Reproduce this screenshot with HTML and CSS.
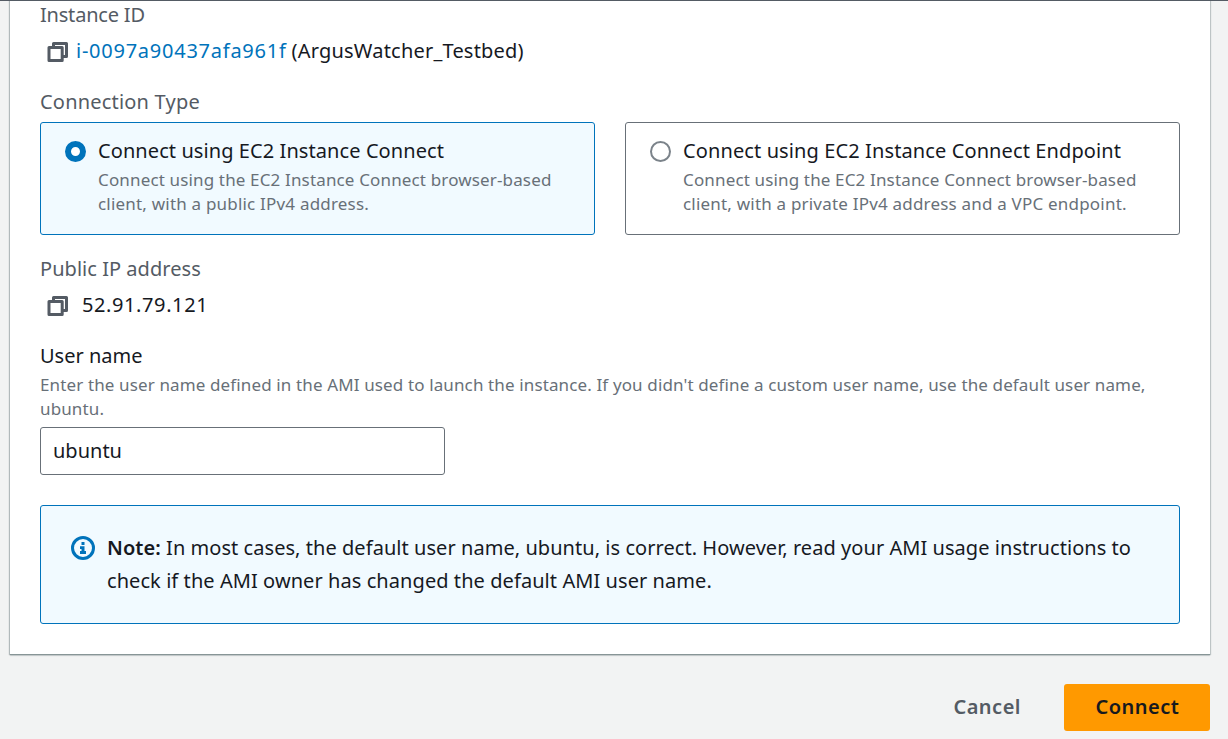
FILE: index.html
```html
<!DOCTYPE html>
<html lang="en">
<head>
<meta charset="utf-8">
<title>Connect to instance</title>
<link rel="stylesheet" href="styles.css">
</head>
<body>
<svg class="sprite" aria-hidden="true">
  <symbol id="copy" viewBox="0 0 22 22">
    <path d="M6.5 6V2.5h13v13H16" fill="none" stroke="currentColor" stroke-width="3" stroke-linejoin="round"/>
    <rect x="2" y="6.4" width="13.2" height="13.2" fill="none" stroke="currentColor" stroke-width="3" stroke-linejoin="round"/>
  </symbol>
</svg>
<main class="panel">
  <section class="field">
    <div class="label t-instance">Instance ID</div>
    <div class="value"><svg class="copy"><use href="#copy"/></svg><a class="link">i-0097a90437afa961f</a><span class="name">(ArgusWatcher_Testbed)</span></div>
  </section>
  <section class="field type">
    <div class="label t-type">Connection Type</div>
    <div class="tiles">
      <label class="tile selected">
        <span class="radio"></span>
        <span class="tile-body">
          <span class="tile-title">Connect using EC2 Instance Connect</span>
          <span class="hint">Connect using the EC2 Instance Connect browser-based<br><span class="t-public">client, with a public IPv4 address.</span></span>
        </span>
      </label>
      <label class="tile">
        <span class="radio"></span>
        <span class="tile-body">
          <span class="tile-title t-endpoint">Connect using EC2 Instance Connect Endpoint</span>
          <span class="hint">Connect using the EC2 Instance Connect browser-based<br><span class="t-private">client, with a private IPv4 address and a VPC endpoint.</span></span>
        </span>
      </label>
    </div>
  </section>
  <section class="field ip">
    <div class="label t-ip">Public IP address</div>
    <div class="value"><svg class="copy"><use href="#copy"/></svg><span class="address">52.91.79.121</span></div>
  </section>
  <section class="field user">
    <div class="label dark">User name</div>
    <div class="hint t-user">Enter the user name defined in the AMI used to launch the instance. If you didn't define a custom user name, use the default user name,<br>ubuntu.</div>
    <div class="input">ubuntu</div>
  </section>
  <section class="note">
    <svg class="info" viewBox="0 0 24 24"><circle cx="12" cy="12" r="10.5" fill="none" stroke="currentColor" stroke-width="3"/><path d="M10.5 6h3v3h-3zM9 10.2h4.5V15H15v3H9v-3h1.5v-2H9z" fill="currentColor"/></svg>
    <p class="note-text"><b>Note:</b> In most cases, the default user name, ubuntu, is correct. However, read your AMI usage instructions to<br><span class="t-check">check if the AMI owner has changed the default AMI user name.</span></p>
  </section>
</main>
<footer class="actions">
  <span class="button plain">Cancel</span>
  <span class="button primary">Connect</span>
</footer>
</body>
</html>
```
FILE: styles.css
```css
* { box-sizing: border-box; }
body {
  margin: 0;
  padding: 0 18px 0 10px;
  height: 739px;
  overflow: hidden;
  background: #f2f3f3;
  color: #16191f;
  font: 20px/28px "Noto Sans", sans-serif;
}
body::before {
  content: "";
  position: absolute;
  inset: 0 0 auto;
  height: 1px;
  background: #545b64;
}
.sprite { position: absolute; width: 0; height: 0; }
.panel {
  height: 655px;
  padding: 1px 30px 0;
  background: #fff;
  border-bottom: 1px solid #879596;
  box-shadow: 0 1px 1px rgba(0, 28, 36, .12), 1px 0 1px rgba(0, 28, 36, .2), -1px 0 1px rgba(0, 28, 36, .25);
}
.label { color: #545b64; white-space: nowrap; }
.dark { color: #16191f; }
.value { display: flex; align-items: center; margin-top: 8px; padding-left: 7px; white-space: nowrap; }
.copy { width: 22px; height: 22px; margin-top: 2px; color: #545b64; }
.link { margin-left: 7px; color: #0073bb; letter-spacing: .75px; }
.name { margin-left: 5px; letter-spacing: .2px; }
.address { margin-left: 13px; letter-spacing: .6px; }
.type { margin-top: 23px; }
.ip { margin-top: 20px; }
.user { margin-top: 23px; }
.tiles { display: grid; grid-template-columns: 1fr 1fr; gap: 30px; margin-top: 6px; }
.tile {
  display: flex;
  height: 113px;
  padding: 14px 23px 0 24px;
  border: 1px solid #687078;
  border-radius: 3px;
}
.selected { background: #f1faff; border-color: #0073bb; }
.radio {
  flex: none;
  width: 21px;
  height: 21px;
  margin: 4px 12px 0 0;
  border: 2px solid #7b838a;
  border-radius: 50%;
  background: #fff;
}
.selected .radio { border: 6px solid #0073bb; }
.tile-body, .tile-title, .hint { display: block; white-space: nowrap; }
.tile-title { letter-spacing: .08px; }
.hint { margin-top: 3px; color: #687078; font-size: 17px; line-height: 24px; letter-spacing: .15px; }
.input {
  width: 405px;
  height: 48px;
  margin-top: 6px;
  padding: 9px 12px;
  border: 1px solid #687078;
  border-radius: 3px;
  background: #fff;
}
.note {
  display: flex;
  height: 119px;
  margin-top: 30px;
  padding: 25px 30px;
  border: 1px solid #0073bb;
  border-radius: 3px;
  background: #f1faff;
}
.info { flex: none; width: 24px; height: 24px; margin: 5px 12px 0 0; color: #0073bb; }
.note-text { margin: 0; line-height: 33px; letter-spacing: .05px; white-space: nowrap; }
b { font-weight: 600; }
.actions { display: flex; justify-content: flex-end; gap: 43px; margin-top: 29px; }
.button { height: 47px; line-height: 46px; font-weight: 600; letter-spacing: .5px; }
.plain { color: #545b64; }
.primary { width: 146px; padding-left: 1px; border-radius: 3px; background: #ff9900; text-align: center; }
.t-instance { letter-spacing: -.2px; }
.t-type { letter-spacing: .2px; }
.t-ip { letter-spacing: .04px; }
.t-endpoint { letter-spacing: .11px; }
.t-public { letter-spacing: .2px; }
.t-private { letter-spacing: .2px; }
.t-user { letter-spacing: .13px; }
.t-check { letter-spacing: .07px; }
```
